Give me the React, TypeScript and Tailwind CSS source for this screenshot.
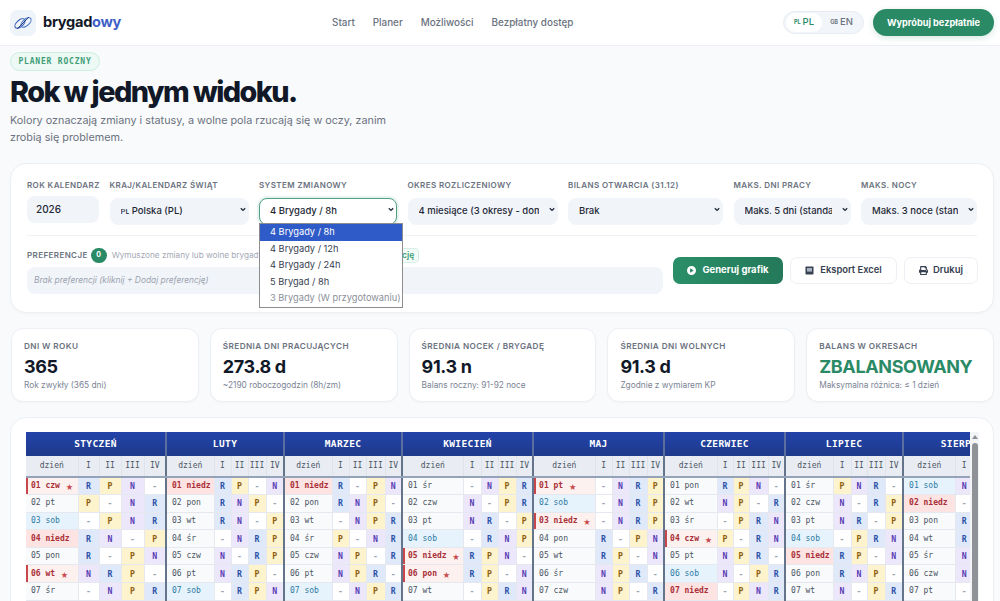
import React from "react";
import { FaPrint } from "react-icons/fa";
import { FaCirclePlay } from "react-icons/fa6";

type Day = [string, string, string, "h" | "n" | "s" | "f" | ""];

const months: { name: string; cols: string[]; days: Day[] }[] = [
  {
    name: "STYCZEŃ",
    cols: ["w-[52px]", "w-[21px]", "w-[22px]", "w-[23px]", "w-[22px]"],
    days: [
      ["01 czw", "★", "RPN-", "f"],
      ["02 pt", "", "P-NR", ""],
      ["03 sob", "", "-PNR", "s"],
      ["04 niedz", "", "RN-P", "n"],
      ["05 pon", "", "R-PN", ""],
      ["06 wt", "★", "NRP-", "f"],
      ["07 śr", "", "-NPR", ""],
    ],
  },
  {
    name: "LUTY",
    cols: ["w-[48px]", "w-[17px]", "w-[17px]", "w-[18px]", "w-[18px]"],
    days: [
      ["01 niedz", "", "RP-N", "n"],
      ["02 pon", "", "RNP-", ""],
      ["03 wt", "", "RN-P", ""],
      ["04 śr", "", "-NRP", ""],
      ["05 czw", "", "N-RP", ""],
      ["06 pt", "", "NRP-", ""],
      ["07 sob", "", "-RPN", "s"],
    ],
  },
  {
    name: "MARZEC",
    cols: ["w-[48px]", "w-[17px]", "w-[17px]", "w-[19px]", "w-[17px]"],
    days: [
      ["01 niedz", "", "R-PN", "n"],
      ["02 pon", "", "RNP-", ""],
      ["03 wt", "", "-NPR", ""],
      ["04 śr", "", "P-NR", ""],
      ["05 czw", "", "NP-R", ""],
      ["06 pt", "", "NPR-", ""],
      ["07 sob", "", "-NPR", "s"],
    ],
  },
  {
    name: "KWIECIEŃ",
    cols: ["w-[61px]", "w-[18px]", "w-[17px]", "w-[18px]", "w-[17px]"],
    days: [
      ["01 śr", "", "-NPR", ""],
      ["02 czw", "", "N-PR", ""],
      ["03 pt", "", "NR-P", ""],
      ["04 sob", "", "-RNP", "s"],
      ["05 niedz", "★", "RPN-", "f"],
      ["06 pon", "★", "RP-N", "f"],
      ["07 wt", "", "-PRN", ""],
    ],
  },
  {
    name: "MAJ",
    cols: ["w-[62px]", "w-[17px]", "w-[17px]", "w-[18px]", "w-[17px]"],
    days: [
      ["01 pt", "★", "-NRP", "f"],
      ["02 sob", "", "-NRP", "s"],
      ["03 niedz", "★", "-NRP", "f"],
      ["04 pon", "", "R-PN", ""],
      ["05 wt", "", "RP-N", ""],
      ["06 śr", "", "NPR-", ""],
      ["07 czw", "", "NP-R", ""],
    ],
  },
  {
    name: "CZERWIEC",
    cols: ["w-[53px]", "w-[16px]", "w-[16px]", "w-[19px]", "w-[17px]"],
    days: [
      ["01 pon", "", "RPN-", ""],
      ["02 wt", "", "NP-R", ""],
      ["03 śr", "", "-PRN", ""],
      ["04 czw", "★", "P-RN", "f"],
      ["05 pt", "", "NPR-", ""],
      ["06 sob", "", "N-PR", "s"],
      ["07 niedz", "", "-PNR", "n"],
    ],
  },
  {
    name: "LIPIEC",
    cols: ["w-[48px]", "w-[18px]", "w-[16px]", "w-[18px]", "w-[18px]"],
    days: [
      ["01 śr", "", "PNR-", ""],
      ["02 czw", "", "N-RP", ""],
      ["03 pt", "", "NR-P", ""],
      ["04 sob", "", "-PRN", "s"],
      ["05 niedz", "", "RP-N", "n"],
      ["06 pon", "", "RNP-", ""],
      ["07 wt", "", "N-PR", ""],
    ],
  },
  {
    name: "SIERPIEŃ",
    cols: ["w-[52px]", "w-[18px]", "w-[18px]", "w-[18px]", "w-[18px]"],
    days: [
      ["01 sob", "", "N-PR", "s"],
      ["02 niedz", "", "-NRP", "n"],
      ["03 pon", "", "RNP-", ""],
      ["04 wt", "", "RNP-", ""],
      ["05 śr", "", "NR-P", ""],
      ["06 czw", "", "NRP-", ""],
      ["07 pt", "", "-RPN", ""],
    ],
  },
];

const shiftClass: Record<string, string> = {
  R: "bg-[#dfe9f9] text-[#2c52a8]",
  P: "bg-[#fdf3cd] text-[#8f5f10]",
  N: "bg-[#ece7fb] text-[#5a3db4]",
  "-": "bg-white text-[#9ca3af]",
};

const dayClass: Record<string, string> = {
  "": "bg-[#f9fafb] text-[#4b5563]",
  s: "bg-[#e6f3fc] text-[#2f7aa3]",
  n: "bg-[#fde3e1] text-[#a92f38] font-bold",
  f: "bg-[#fdf1ef] text-[#a92f38] font-bold shadow-[inset_2px_0_0_#c8474c]",
};

const mono = "font-['DejaVu_Sans_Mono','Liberation_Mono',monospace]";

function Field({ label, className, children }: { label: string; className: string; children: React.ReactNode }) {
  return (
    <div className={`flex flex-none flex-col gap-[5px] ${className}`}>
      <div className="h-[12px] whitespace-nowrap text-[8px] leading-[12px] font-semibold tracking-[0.05em] text-[#6b7280]">{label}</div>
      {children}
    </div>
  );
}

function Sel({ value, active }: { value: string; active?: boolean }) {
  return (
    <div className="relative h-[27px] w-full">
      <select
        defaultValue={value}
        className={`h-[27px] w-full appearance-none rounded-[8px] border pl-[10px] pr-[18px] text-[9.5px] font-medium text-[#1f2937] ${
          active ? "border-[#4f9f80] bg-white shadow-[0_0_0_2px_rgba(42,138,102,0.1)]" : "border-[#f1f4f9] bg-[#f1f4f9]"
        }`}
      >
        <option>{value}</option>
      </select>
      <svg className="pointer-events-none absolute right-[3px] top-[11px]" width="6" height="5" viewBox="0 0 6 5" fill="none">
        <path d="M0.8 1.2 L3 3.4 L5.2 1.2" stroke="#1f2937" strokeWidth="1.3" />
      </svg>
    </div>
  );
}

function Stat({ label, value, sub, green }: { label: string; value: string; sub: string; green?: boolean }) {
  return (
    <div className="flex h-[74px] min-w-0 flex-1 basis-0 flex-col rounded-[12px] border border-[#eceff4] bg-white px-[12px] pt-[11px] shadow-[0_1px_2px_rgba(15,23,42,0.03)]">
      <div className="h-[12px] whitespace-nowrap text-[8.2px] leading-[12px] font-semibold tracking-[0.05em] text-[#6b7280]">{label}</div>
      <div className={`mt-[3px] h-[24px] whitespace-nowrap text-[18px] leading-[24px] font-bold tracking-[-0.02em] ${green ? "text-[#2a8a66]" : "text-[#111827]"}`}>{value}</div>
      <div className="whitespace-nowrap text-[8.3px] leading-[12px] text-[#7b8494]">{sub}</div>
    </div>
  );
}

export default function App() {
  return (
    <div className="h-[601px] w-[1000px] overflow-hidden bg-[#f9fafb] font-['Inter',sans-serif]">
      <header className="flex h-[46px] items-center border-b border-[#eceef2] bg-white pl-[10px] pr-[6px]">
        <div className="flex w-[322px] flex-none items-center gap-[7px]">
          <div className="flex h-[26px] w-[26px] items-center justify-center rounded-[7px] bg-[#eff4fb]">
            <svg width="20" height="16" viewBox="0 0 20 16" fill="none">
              <ellipse cx="7" cy="8.5" rx="6.2" ry="3.2" transform="rotate(-42 7 8.5)" stroke="#3358b0" strokeWidth="1.1" />
              <ellipse cx="13" cy="7.5" rx="6.2" ry="3.2" transform="rotate(-42 13 7.5)" stroke="#4a78c8" strokeWidth="1.1" />
              <path d="M4 14 L16 2" stroke="#24407f" strokeWidth="1" />
            </svg>
          </div>
          <div className="text-[14.6px] font-bold tracking-[-0.02em] text-[#111827]">
            brygad<span className="text-[#3f5fc8]">owy</span>
          </div>
        </div>
        <nav className="flex flex-1 items-center gap-[18px] text-[9.9px] font-medium text-[#6b7280]">
          <span>Start</span>
          <span>Planer</span>
          <span>Możliwości</span>
          <span>Bezpłatny dostęp</span>
        </nav>
        <div className="mr-[9px] flex h-[23px] w-[81px] items-center rounded-full border border-[#e8ecf2] bg-[#f2f5f9] p-[2px] text-[9.5px] font-medium">
          <div className="flex h-[19px] w-[36px] items-center justify-center gap-[2px] rounded-full bg-white text-[#2a8a66]">
            <span className="text-[5.5px] font-bold">PL</span>PL
          </div>
          <div className="flex h-[19px] flex-1 items-center justify-center gap-[2px] text-[#6b7280]">
            <span className="text-[5.5px] font-bold">GB</span>EN
          </div>
        </div>
        <button className="h-[27px] w-[121px] rounded-full bg-[#2a8a66] text-[9.2px] font-bold text-white shadow-[0_2px_6px_rgba(42,138,102,0.2)]">Wypróbuj bezpłatnie</button>
      </header>

      <main className="pl-[10px] pr-[6px]">
        <div className="mt-[6px] flex h-[19px] w-[90px] items-center justify-center rounded-full border border-[#cdeee0] bg-[#edf9f4]">
          <span className={`${mono} text-[8px] font-bold tracking-[0.1em] text-[#3f9d78]`}>PLANER ROCZNY</span>
        </div>
        <h1 className="mt-[4px] h-[34px] text-[28.8px] leading-[34px] font-extrabold tracking-[-0.055em] text-[#111827]">Rok w jednym widoku.</h1>
        <p className="mt-[4px] w-[390px] text-[10.8px] leading-[16.5px] text-[#6b7280]">Kolory oznaczają zmiany i statusy, a wolne pola rzucają się w oczy, zanim zrobią się problemem.</p>

        <section className="mt-[17px] h-[150px] rounded-[16px] border border-[#eceff3] bg-white pl-[16px] pr-[16px] pt-[15px] shadow-[0_1px_3px_rgba(15,23,42,0.03)]">
          <div className="flex gap-[10.5px]">
            <Field label="ROK KALENDARZ" className="w-[72px]">
              <div className="flex h-[27px] items-center rounded-[8px] bg-[#f1f4f9] pl-[9px] text-[10px] font-medium text-[#1f2937]">2026</div>
            </Field>
            <Field label="KRAJ/KALENDARZ ŚWIĄT" className="w-[139px]">
              <Sel value="ᴘʟ Polska (PL)" />
            </Field>
            <Field label="SYSTEM ZMIANOWY" className="relative w-[138px]">
              <Sel value="4 Brygady / 8h" active />
              <div className="absolute left-0 top-[44px] z-10 w-[144px] border border-[#8d8d8d] bg-white text-[9.25px] leading-[16.5px] text-[#374151]">
                <div className="bg-[#2f5bc8] pl-[10px] text-white">4 Brygady / 8h</div>
                <div className="pl-[10px]">4 Brygady / 12h</div>
                <div className="pl-[10px]">4 Brygady / 24h</div>
                <div className="pl-[10px]">5 Brygad / 8h</div>
                <div className="whitespace-nowrap pl-[10px] text-[#8b8f97]">3 Brygady (W przygotowaniu)</div>
              </div>
            </Field>
            <Field label="OKRES ROZLICZENIOWY" className="w-[150px]">
              <Sel value="4 miesiące (3 okresy - domyślnie)" />
            </Field>
            <Field label="BILANS OTWARCIA (31.12)" className="w-[155px]">
              <Sel value="Brak" />
            </Field>
            <Field label="MAKS. DNI PRACY" className="w-[117px]">
              <Sel value="Maks. 5 dni (standard)" />
            </Field>
            <Field label="MAKS. NOCY" className="w-[116px]">
              <Sel value="Maks. 3 noce (standard)" />
            </Field>
          </div>
          <div className="mt-[12px] h-[1px] bg-[#f0f2f5]" />
          <div className="mt-[11px] flex items-center">
            <div className="w-[636px] flex-none">
              <div className="flex h-[16px] items-center">
                <span className="text-[8px] font-semibold tracking-[0.05em] text-[#6b7280]">PREFERENCJE</span>
                <span className="ml-[3px] flex h-[15px] w-[16px] items-center justify-center rounded-full bg-[#2a8a66] text-[7px] font-bold text-white">0</span>
                <span className="ml-[5px] whitespace-nowrap text-[8.2px] text-[#a3a9b5]">Wymuszone zmiany lub wolne brygady</span>
                <span className="ml-[65px] whitespace-nowrap rounded-[4px] border border-[#d5efe4] bg-[#f2fbf7] px-[4px] text-[8.5px] leading-[13px] font-semibold text-[#3f9d78]">+ Dodaj preferencję</span>
              </div>
              <div className="mt-[4px] flex h-[27px] items-center rounded-[8px] bg-[#f1f4f9] pl-[7px] text-[8.4px] italic text-[#9ca3af]">Brak preferencji (kliknij + Dodaj preferencję)</div>
            </div>
            <button className="ml-[10px] flex h-[27px] w-[110px] flex-none items-center justify-center gap-[6px] rounded-[7px] bg-gradient-to-r from-[#2a8f69] to-[#24795a] text-[9.5px] font-bold text-white">
              <FaCirclePlay className="h-[9px] w-[9px]" />
              Generuj grafik
            </button>
            <button className="ml-[7px] flex h-[27px] w-[107px] flex-none items-center justify-center gap-[6px] rounded-[7px] border border-[#eceff3] bg-white text-[9.4px] font-semibold text-[#374151]">
              <svg width="9" height="9" viewBox="0 0 9 9">
                <rect x="0.5" y="0.5" width="8" height="8" rx="0.8" fill="#374151" />
                <rect x="2" y="2" width="5" height="3.6" fill="#aab2c0" />
              </svg>
              Eksport Excel
            </button>
            <button className="ml-[7px] flex h-[27px] w-[74px] flex-none items-center justify-center gap-[5px] rounded-[7px] border border-[#eceff3] bg-white text-[9.5px] font-semibold text-[#374151]">
              <FaPrint className="h-[9px] w-[9px]" />
              Drukuj
            </button>
          </div>
        </section>

        <div className="mt-[15px] ml-[1px] flex gap-[11px]">
          <Stat label="DNI W ROKU" value="365" sub="Rok zwykły (365 dni)" />
          <Stat label="ŚREDNIA DNI PRACUJĄCYCH" value="273.8 d" sub="~2190 roboczogodzin (8h/zm)" />
          <Stat label="ŚREDNIA NOCEK / BRYGADĘ" value="91.3 n" sub="Balans roczny: 91-92 noce" />
          <Stat label="ŚREDNIA DNI WOLNYCH" value="91.3 d" sub="Zgodnie z wymiarem KP" />
          <Stat label="BALANS W OKRESACH" value="ZBALANSOWANY" sub="Maksymalna różnica: ≤ 1 dzień" green />
        </div>

        <section className="mt-[15px] flex h-[200px] rounded-[16px] border border-[#eceff3] bg-white pl-[15px] pt-[14px]">
          <div className="w-[944px] flex-none overflow-hidden">
            <table className={`${mono} w-[1000px] table-fixed border-collapse`}>
              <colgroup>
                {months.flatMap((m) => m.cols.map((c, i) => <col key={m.name + i} className={c} />))}
              </colgroup>
              <thead>
                <tr>
                  {months.map((m) => (
                    <th key={m.name} colSpan={5} className="h-[24px] border-r-2 border-r-[#5b6f9e] bg-gradient-to-b from-[#2343ab] to-[#1e3a8a] p-0 text-[9.5px] font-bold tracking-[0.04em] text-white">
                      {m.name}
                    </th>
                  ))}
                </tr>
                <tr>
                  {months.flatMap((m) =>
                    ["dzień", "I", "II", "III", "IV"].map((h, i) => (
                      <th key={m.name + h} className={`h-[21px] border-b-2 border-b-[#94a3b8] bg-[#e9edf3] p-0 text-[8px] font-medium text-[#4b5563] ${i === 4 ? "border-r-2 border-r-[#64748b]" : "border-r border-r-[#dfe4ea]"}`}>
                        {h}
                      </th>
                    ))
                  )}
                </tr>
              </thead>
              <tbody>
                {[0, 1, 2, 3, 4, 5, 6].map((r) => (
                  <tr key={r}>
                    {months.flatMap((m) => {
                      const d = m.days[r];
                      return [
                        <td key={m.name + "d"} className={`h-[17.6px] border-b border-r border-[#e5e9ef] p-0 pl-[5px] text-[8px] leading-[10px] whitespace-nowrap ${dayClass[d[3]]}`}>
                          <span className="flex items-center">
                            <span>{d[0]}</span>
                            {d[1] && <span className="ml-[6px] text-[11.5px] font-normal text-[#c8474c]">{d[1]}</span>}
                          </span>
                        </td>,
                        ...d[2].split("").map((s, i) => (
                          <td key={m.name + i} className={`border-b border-[#e5e9ef] p-0 text-center text-[8.2px] leading-[10px] font-bold ${shiftClass[s]} ${i === 3 ? "border-r-2 border-r-[#64748b]" : "border-r"}`}>
                            {s}
                          </td>
                        )),
                      ];
                    })}
                  </tr>
                ))}
              </tbody>
            </table>
          </div>
          <div className="flex w-[9px] flex-none flex-col items-center bg-[#f3f4f6]">
            <div className="mt-[3px] h-0 w-0 border-x-[3px] border-b-[4px] border-x-transparent border-b-[#8b8f94]" />
            <div className="mt-[4px] h-full w-[6px] rounded-t-[3px] bg-[#8f9296]" />
          </div>
        </section>
      </main>
    </div>
  );
}
